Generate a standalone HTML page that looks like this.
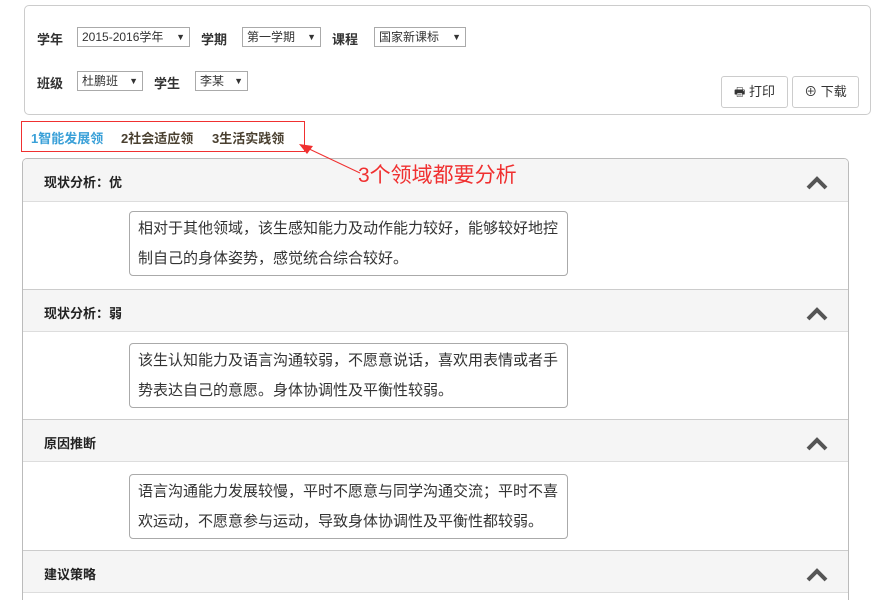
<!DOCTYPE html>
<html><head><meta charset="utf-8"><style>
*{margin:0;padding:0;box-sizing:border-box}
html,body{width:879px;height:600px;overflow:hidden}
body{background:#fff;font-family:"Liberation Sans","Noto Sans CJK SC",sans-serif;font-size:13px;color:#333;position:relative}
.abs{position:absolute}
.top{left:24px;top:5px;width:847px;height:110px;border:1px solid #ccc;border-radius:5px}
.lbl{font-weight:bold;font-size:13px;color:#333}
.sel{border:1px solid #aaa;height:20px;font-size:12px;line-height:18px;padding-left:4px;color:#333;background:#fff}
.sel:after{content:"▼";position:absolute;right:4px;top:0;font-size:9px}
.btn{border:1px solid #ccc;border-radius:3px;height:32px;font-size:13px;line-height:30px;text-align:center;background:#fff}
.panel{left:22px;top:158px;width:827px;height:442px;border:1px solid #bbb;border-bottom:none;border-radius:5px 5px 0 0;overflow:hidden}
.hd{position:absolute;left:0;width:827px;height:43px;background:#f5f5f5;border-bottom:1px solid #ddd}
.hd span{position:absolute;left:21px;top:13px;font-weight:bold;font-size:13px;color:#222}
.hd svg{position:absolute;right:22px;top:17px}
.ta{position:absolute;left:106px;width:439px;height:65px;border:1px solid #aaa;border-radius:4px;font-size:15px;line-height:30px;padding:2px 0 2px 8px;color:#333;white-space:nowrap;overflow:hidden}
.z{z-index:5}
</style></head><body>
<div class="abs top"></div>
<div class="abs lbl" style="left:37px;top:29px">学年</div>
<div class="abs sel" style="left:77px;top:27px;width:113px">2015-2016学年</div>
<div class="abs lbl" style="left:201px;top:29px">学期</div>
<div class="abs sel" style="left:242px;top:27px;width:79px">第一学期</div>
<div class="abs lbl" style="left:332px;top:29px">课程</div>
<div class="abs sel" style="left:374px;top:27px;width:92px">国家新课标</div>
<div class="abs lbl" style="left:37px;top:73px">班级</div>
<div class="abs sel" style="left:77px;top:71px;width:66px">杜鹏班</div>
<div class="abs lbl" style="left:154px;top:73px">学生</div>
<div class="abs sel" style="left:195px;top:71px;width:53px">李某</div>
<div class="abs btn" style="left:721px;top:76px;width:67px"><span style="font-size:12px">🖶</span> 打印</div>
<div class="abs btn" style="left:792px;top:76px;width:67px">⊕ 下载</div>
<div class="abs z" style="left:21px;top:121px;width:284px;height:31px;border:1.5px solid #f03030"></div>
<div class="abs" style="left:31px;top:128px;font-weight:bold;font-size:13px;color:#3aa0d8">1智能发展领</div>
<div class="abs" style="left:121px;top:128px;font-weight:bold;font-size:13px;color:#4a4030">2社会适应领</div>
<div class="abs" style="left:212px;top:128px;font-weight:bold;font-size:13px;color:#4a4030">3生活实践领</div>
<div class="abs panel">
<div class="hd" style="top:0"><span>现状分析：优</span><svg width="22" height="14"><path d="M2 12 L11 3 L20 12" stroke="#555" stroke-width="4" fill="none"/></svg></div>
<div class="ta" style="top:52px">相对于其他领域，该生感知能力及动作能力较好，能够较好地控<br>制自己的身体姿势，感觉统合综合较好。</div>
<div class="hd" style="top:130px;border-top:1px solid #ccc"><span>现状分析：弱</span><svg width="22" height="14"><path d="M2 12 L11 3 L20 12" stroke="#555" stroke-width="4" fill="none"/></svg></div>
<div class="ta" style="top:184px">该生认知能力及语言沟通较弱，不愿意说话，喜欢用表情或者手<br>势表达自己的意愿。身体协调性及平衡性较弱。</div>
<div class="hd" style="top:260px;border-top:1px solid #ccc"><span>原因推断</span><svg width="22" height="14"><path d="M2 12 L11 3 L20 12" stroke="#555" stroke-width="4" fill="none"/></svg></div>
<div class="ta" style="top:315px">语言沟通能力发展较慢，平时不愿意与同学沟通交流；平时不喜<br>欢运动，不愿意参与运动，导致身体协调性及平衡性都较弱。</div>
<div class="hd" style="top:391px;border-top:1px solid #ccc"><span>建议策略</span><svg width="22" height="14"><path d="M2 12 L11 3 L20 12" stroke="#555" stroke-width="4" fill="none"/></svg></div>
</div>
<svg class="abs z" style="left:295px;top:140px" width="70" height="40"><line x1="10" y1="7" x2="65" y2="33" stroke="#f03030" stroke-width="1"/><polygon points="4,4 18,6 12,14" fill="#f03030"/></svg>
<div class="abs z" style="left:358px;top:159px;font-size:21px;color:#f03030">3个领域都要分析</div>
</body></html>
